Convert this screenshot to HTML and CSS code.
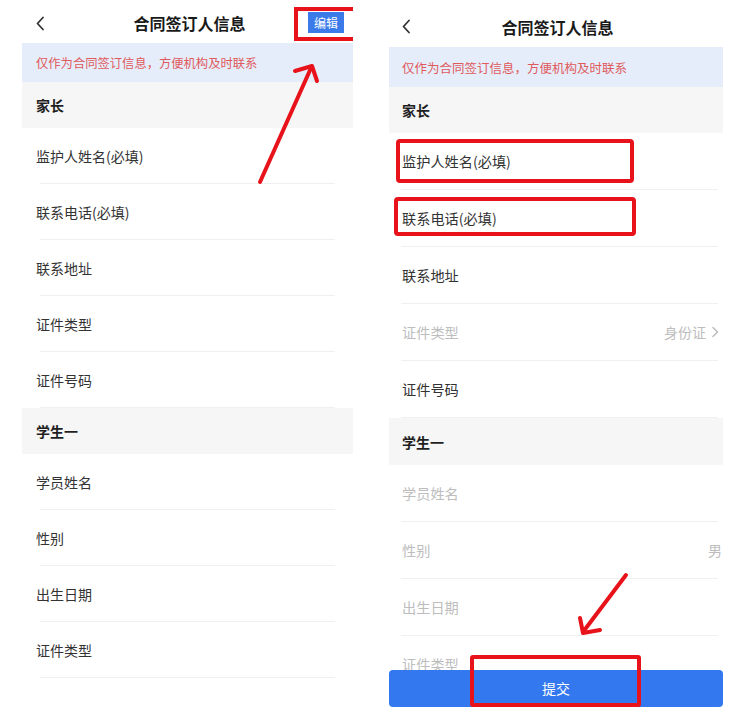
FILE: index.html
```html
<!DOCTYPE html>
<html lang="zh-CN">
<head>
<meta charset="utf-8">
<title>合同签订人信息</title>
<link rel="stylesheet" href="styles.css">
</head>
<body>
<div class="stage">
  <section class="phone phone-left">
    <header class="nav nav-left">
      <span class="back"><svg width="10" height="15" viewBox="0 0 10 15"><path d="M8 1.5 L2.5 7.5 L8 13.5" fill="none" stroke="#333" stroke-width="1.8" stroke-linecap="round" stroke-linejoin="round"/></svg></span>
      <h1 class="title">合同签订人信息</h1>
      <span class="nav-right"><button class="edit">编辑</button></span>
    </header>
    <div class="notice">仅作为合同签订信息，方便机构及时联系</div>
    <div class="group-title">家长</div>
    <ul class="list">
      <li class="row"><span class="label">监护人姓名(必填)</span></li>
      <li class="row"><span class="label">联系电话(必填)</span></li>
      <li class="row"><span class="label">联系地址</span></li>
      <li class="row"><span class="label">证件类型</span></li>
      <li class="row"><span class="label">证件号码</span></li>
    </ul>
    <div class="group-title">学生一</div>
    <ul class="list">
      <li class="row"><span class="label">学员姓名</span></li>
      <li class="row"><span class="label">性别</span></li>
      <li class="row"><span class="label">出生日期</span></li>
      <li class="row"><span class="label">证件类型</span></li>
    </ul>
  </section>

  <section class="phone phone-right">
    <header class="nav nav-r">
      <span class="back"><svg width="10" height="15" viewBox="0 0 10 15"><path d="M8 1.5 L2.5 7.5 L8 13.5" fill="none" stroke="#333" stroke-width="1.8" stroke-linecap="round" stroke-linejoin="round"/></svg></span>
      <h1 class="title">合同签订人信息</h1>
      <span class="nav-right"></span>
    </header>
    <div class="notice">仅作为合同签订信息，方便机构及时联系</div>
    <div class="group-title">家长</div>
    <ul class="list">
      <li class="row"><span class="label">监护人姓名(必填)</span></li>
      <li class="row"><span class="label">联系电话(必填)</span></li>
      <li class="row"><span class="label">联系地址</span></li>
      <li class="row is-disabled"><span class="label">证件类型</span><span class="value">身份证<svg class="arrow" width="9" height="12" viewBox="0 0 9 12"><path d="M2 1.5 L6.5 6 L2 10.5" fill="none" stroke="#bbb" stroke-width="1.5" stroke-linecap="round" stroke-linejoin="round"/></svg></span></li>
      <li class="row"><span class="label">证件号码</span></li>
    </ul>
    <div class="group-title">学生一</div>
    <ul class="list">
      <li class="row is-disabled"><span class="label">学员姓名</span></li>
      <li class="row is-disabled"><span class="label">性别</span><span class="value value-edge">男</span></li>
      <li class="row is-disabled"><span class="label">出生日期</span></li>
      <li class="row is-disabled"><span class="label">证件类型</span></li>
    </ul>
    <button class="submit">提交</button>
  </section>
</div>

<svg class="annot" width="746" height="722" viewBox="0 0 746 722">
  <g fill="none" stroke="#e8121a" stroke-width="4" stroke-linecap="round" stroke-linejoin="round">
    <path d="M353 9 H296 V39 H353" stroke-linejoin="miter" stroke-linecap="butt"/>
    <path d="M260 182 L311 68"/>
    <path d="M295 71 L312 66 L317 81"/>
    <rect x="398" y="141" width="234" height="40" rx="2"/>
    <rect x="396" y="199" width="238" height="35" rx="2"/>
    <rect x="472" y="657" width="167" height="48" rx="1"/>
    <path d="M626 575 L583 632"/>
    <path d="M580 618 L583 633 L600 630"/>
  </g>
</svg>
</body>
</html>
```

FILE: styles.css
```css
* { box-sizing: border-box; }

html, body {
  margin: 0;
  padding: 0;
  background: #ffffff;
}

body {
  position: relative;
  width: 746px;
  height: 722px;
  overflow: hidden;
  font-family: "Noto Sans CJK SC", "Noto Sans", sans-serif;
  color: #333;
}

.stage {
  display: flex;
  gap: 36px;
  padding-left: 22px;
  height: 722px;
}

.phone {
  position: relative;
  overflow: hidden;
  height: 722px;
  background: #fff;
}

.phone-left { width: 331px; }
.phone-right { width: 334px; }

/* header */
.nav {
  display: grid;
  grid-template-columns: 1fr auto 1fr;
  align-items: center;
}

.nav-left { height: 43px; padding: 3px 9px 0 13px; }
.nav-r { height: 47px; padding: 6px 9px 0 12px; }

.back { display: flex; align-items: center; }

.title {
  margin: 0;
  font-size: 16px;
  font-weight: 700;
  color: #1a1a1a;
  line-height: 20px;
}

.nav-right { display: flex; justify-content: flex-end; }

.edit {
  width: 36px;
  height: 21px;
  border: 0;
  padding: 0;
  background: #3a7be9;
  color: #fff;
  font-family: inherit;
  font-size: 12px;
  line-height: 21px;
  margin-top: -2px;
}

/* notice */
.notice {
  background: #e5edfb;
  color: #e0595b;
  font-size: 12.3px;
  display: flex;
  align-items: center;
}

.phone-left .notice { height: 39px; padding-left: 14px; }
.phone-right .notice { height: 40px; padding-left: 13px; font-size: 12.5px; }

/* groups */
.group-title {
  background: #f6f6f6;
  font-size: 14px;
  font-weight: 700;
  color: #1f1f1f;
  display: flex;
  align-items: center;
}

.phone-left .group-title { height: 46px; padding-left: 14px; }
.phone-right .group-title { height: 46px; padding-left: 13px; }
.phone-right .list + .group-title { height: 47px; }

.list {
  list-style: none;
  margin: 0;
  padding: 0;
}

.row {
  display: flex;
  align-items: center;
  justify-content: space-between;
  border-bottom: 1px solid #f0f0f0;
  font-size: 14px;
  color: #333;
}

.phone-left .row {
  height: 56px;
  margin: 0 18px 0 18px;
}
.phone-left .row .label { margin-left: -4px; }

.phone-right .row {
  height: 57px;
  margin: 0 5px 0 12px;
}
.phone-right .row .label { margin-left: 1px; font-size: 14.2px; }

.row.is-disabled { color: #bdbdbd; }

.value {
  display: flex;
  align-items: center;
  gap: 5px;
  color: #bdbdbd;
  font-size: 14px;
  margin-right: -2px;
}

.value-edge { margin-right: -4px; }

.arrow { display: block; }

/* submit */
.submit {
  position: absolute;
  left: 0;
  right: 0;
  top: 670px;
  height: 37px;
  border: 0;
  border-radius: 4px;
  background: #3478ef;
  color: #fff;
  font-family: inherit;
  font-size: 14px;
  line-height: 33px;
}

.annot {
  position: absolute;
  top: 0;
  left: 0;
  pointer-events: none;
}
```
